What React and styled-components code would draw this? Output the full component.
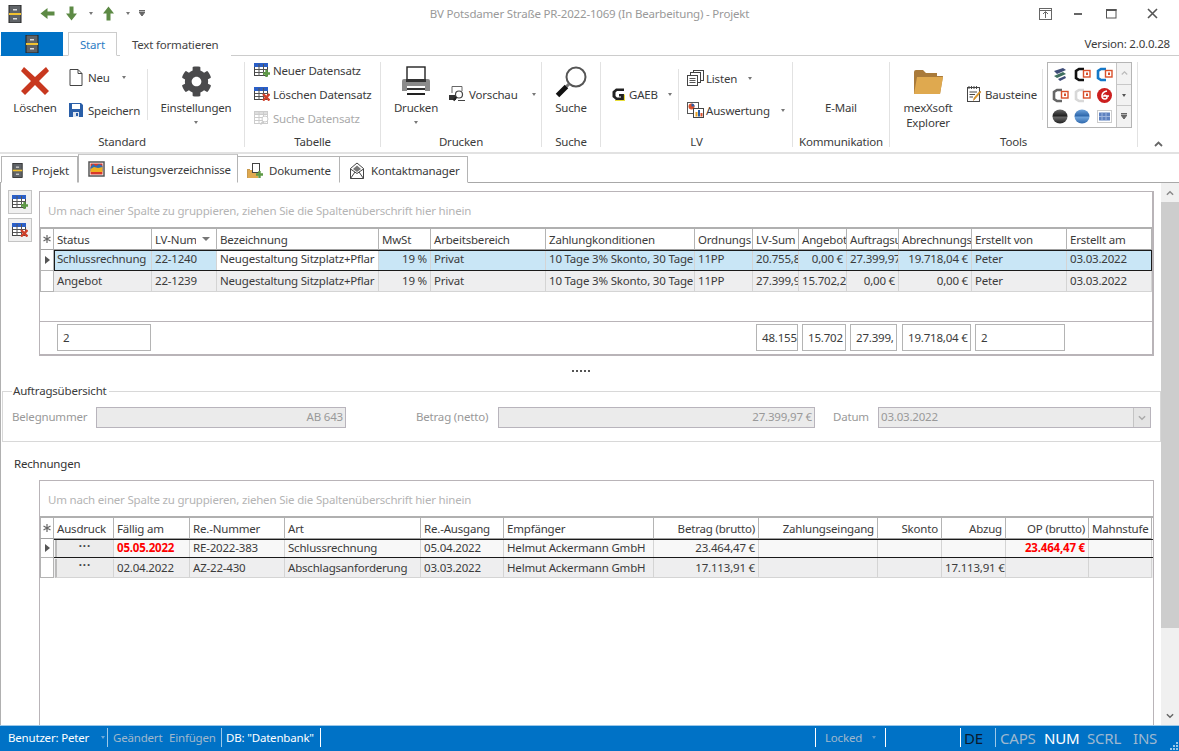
import React from 'react';
import styled, { createGlobalStyle } from 'styled-components';
import { FaCog } from 'react-icons/fa';

const GlobalStyle = createGlobalStyle`
  html, body {
    margin: 0;
    padding: 0;
    background: #fff;
  }
  body {
    font-family: "Noto Sans", "Open Sans", sans-serif;
    font-size: 11.5px;
    letter-spacing: -0.19px;
    color: #3b3b3b;
    overflow: hidden;
  }
  * { box-sizing: border-box; }
`;

const Window = styled.div`
  width: 1179px;
  height: 751px;
  display: flex;
  flex-direction: column;
  overflow: hidden;
  background: #fff;
`;

/* title bar */
const TitleBar = styled.div`
  height: 32px;
  flex: none;
  display: grid;
  grid-template-columns: 390px 1fr 390px;
  align-items: center;
  padding-bottom: 5px;
`;
const QuickBar = styled.div`
  display: flex;
  align-items: center;
  padding-left: 8px;
`;
const QuickItem = styled.span`
  display: flex;
  margin-left: ${p => p.$ml || 0}px;
`;
const TitleText = styled.div`
  text-align: center;
  color: #999;
`;
const WindowButtons = styled.div`
  display: flex;
  justify-content: flex-end;
  align-items: center;
  padding-right: 21px;
`;
const WindowIcon = styled.svg`
  margin-left: ${p => p.$ml || 0}px;
`;
const ArrowSvg = styled.svg`
  transform: rotate(${p => p.$rot}deg);
`;
const Caret = styled.span`
  display: inline-block;
  flex: none;
  width: 0;
  height: 0;
  border-left: ${p => p.$size || 2.5}px solid transparent;
  border-right: ${p => p.$size || 2.5}px solid transparent;
  border-top: ${p => p.$size || 3}px solid ${p => p.$color || '#777'};
  margin-left: ${p => p.$ml || 0}px;
  margin-right: ${p => p.$mr || 0}px;
  margin-top: ${p => p.$mt || 0}px;
`;

/* ribbon tabs */
const TabRow = styled.div`
  height: 24px;
  flex: none;
  display: flex;
  align-items: flex-end;
  padding-left: 1px;
  border-bottom: 1px solid #ccc;
`;
const FileButton = styled.div`
  width: 62px;
  height: 24px;
  margin-bottom: -1px;
  background: #0072c6;
  display: flex;
  align-items: center;
  justify-content: center;
`;
const RibbonTab = styled.div`
  height: 24px;
  margin-left: ${p => p.$ml || 0}px;
  margin-bottom: -1px;
  padding: 0 11px;
  display: flex;
  align-items: center;
  color: ${p => p.$active ? '#2b7cc4' : '#444'};
  background: #fff;
  border: 1px solid ${p => p.$active ? '#ccc' : 'transparent'};
  border-bottom-color: ${p => p.$active ? '#fff' : 'transparent'};
`;
const Version = styled.div`
  margin-left: auto;
  padding-right: 9px;
  align-self: center;
`;

/* ribbon body */
const Ribbon = styled.div`
  height: 98px;
  flex: none;
  display: flex;
  border-bottom: 2px solid #e2e2e2;
  padding-top: 6px;
  position: relative;
`;
const RibbonGroup = styled.div`
  width: ${p => p.$w}px;
  flex: none;
  display: flex;
  flex-direction: column;
  height: 85px;
  border-right: ${p => p.$last ? 'none' : '1px solid #e2e2e2'};
`;
const GroupBody = styled.div`
  flex: 1;
  display: flex;
  min-height: 0;
`;
const GroupLabel = styled.div`
  height: 17px;
  margin-bottom: -3px;
  text-align: center;
  line-height: 17px;
  white-space: nowrap;
`;
const BigButton = styled.div`
  width: ${p => p.$w}px;
  margin-left: ${p => p.$ml || 0}px;
  flex: none;
  display: flex;
  flex-direction: column;
  align-items: center;
  text-align: center;
  line-height: 15px;
  white-space: nowrap;
`;
const BigIcon = styled.div`
  height: 38px;
  flex: none;
  display: flex;
  align-items: center;
  justify-content: center;
`;
const GearIcon = styled(FaCog)`
  color: #4a4a4c;
  font-size: 31px;
`;
const SmallStack = styled.div`
  display: flex;
  flex-direction: column;
  justify-content: space-between;
  flex: none;
  margin-left: ${p => p.$ml || 0}px;
  margin-top: ${p => p.$mt || 0}px;
  width: ${p => p.$w ? `${p.$w}px` : 'auto'};
  height: ${p => p.$h}px;
`;
const SmallButton = styled.div`
  display: flex;
  align-items: center;
  gap: ${p => p.$gap || 4}px;
  white-space: nowrap;
  height: 20px;
  color: ${p => p.$disabled ? '#aaa' : 'inherit'};
`;
const VDivider = styled.div`
  width: 1px;
  height: 51px;
  background: #e2e2e2;
  margin: 7px 0 0 ${p => p.$ml || 0}px;
  flex: none;
`;
const Gallery = styled.div`
  width: 85px;
  height: 66px;
  margin-left: ${p => p.$ml || 0}px;
  display: flex;
  border: 1px solid #b5b5b5;
  flex: none;
`;
const GalleryGrid = styled.div`
  flex: 1;
  display: grid;
  grid-template-columns: repeat(3, 22px);
  grid-auto-rows: 21px;
  align-items: center;
  justify-items: center;
  padding: 1px 0 0 1px;
`;
const GalleryArrows = styled.div`
  width: 15px;
  display: flex;
  flex-direction: column;
  border-left: 1px solid #c4c4c4;
  background: #f2f2f2;
`;
const GalleryArrow = styled.div`
  flex: 1;
  display: flex;
  align-items: center;
  justify-content: center;
  border-bottom: 1px solid #c8c8c8;
  &:last-child { border-bottom: none; }
`;
const CollapseButton = styled.div`
  position: absolute;
  right: 16px;
  bottom: 5px;
  display: flex;
`;

/* document tabs */
const DocTabs = styled.div`
  height: 29px;
  flex: none;
  display: flex;
  align-items: flex-end;
  padding-left: 1px;
  border-bottom: 1px solid #a8a8a8;
`;
const DocTab = styled.div`
  height: ${p => p.$active ? 29 : 27}px;
  margin-bottom: -1px;
  width: ${p => p.$w}px;
  flex: none;
  display: flex;
  align-items: center;
  gap: ${p => p.$gap || 6}px;
  padding-left: ${p => p.$pl || 9}px;
  padding-top: ${p => p.$active ? 1 : 2}px;
  background: #fff;
  border: 1px solid #b4b4b4;
  border-left-width: ${p => p.$first || p.$active ? 1 : 0}px;
  border-bottom-color: #fff;
  border-top-color: ${p => p.$active ? '#c8c8c8' : '#b4b4b4'};
  white-space: nowrap;
`;

/* main */
const Main = styled.div`
  flex: 1;
  min-height: 0;
  display: flex;
  border-left: 1px solid #b0b0b0;
`;
const Content = styled.div`
  flex: 1;
  min-width: 0;
  display: flex;
  flex-direction: column;
  overflow: hidden;
`;
const TopSection = styled.div`
  display: flex;
  padding: 8px 7px 0 7px;
  height: 174px;
  flex: none;
`;
const SideTools = styled.div`
  width: 31px;
  flex: none;
  display: flex;
  flex-direction: column;
  gap: 4px;
  margin-top: -1px;
`;
const ToolButton = styled.div`
  width: 24px;
  height: 24px;
  background: #f0f0f0;
  border: 1px solid #c4c4c4;
  display: flex;
  align-items: center;
  justify-content: center;
`;
const GridPanel = styled.div`
  width: 1115px;
  height: ${p => p.$h}px;
  flex: none;
  border: 1px solid #b9b4b8;
  border-bottom-width: ${p => p.$open ? 0 : 2}px;
  border-right-width: ${p => p.$open ? 1 : 2}px;
  display: flex;
  flex-direction: column;
  overflow: hidden;
`;
const GroupHint = styled.div`
  height: 37px;
  flex: none;
  padding: 11px 0 0 8px;
  color: #b4b4b4;
  border-bottom: 2px solid #b0b0b0;
`;
const Row = styled.div`
  display: grid;
  grid-template-columns: ${p => p.$cols};
  height: ${p => p.$h}px;
  flex: none;
  background: ${p => p.$bg || '#fff'};
  position: relative;
`;
const HeaderCell = styled.div`
  border-right: 1px solid #b4b4b4;
  border-bottom: 1px solid #a0a0a0;
  padding: 0 3px;
  display: flex;
  align-items: center;
  justify-content: ${p => p.$right ? 'flex-end' : 'flex-start'};
  white-space: nowrap;
  overflow: hidden;
  color: #3b3b3b;
  &:first-child { border-left: 1px solid #b4b4b4; justify-content: center; padding: 0; }
`;
const Cell = styled.div`
  border-right: 1px solid #d4d4d4;
  border-bottom: 1px solid #d4d4d4;
  padding: 0 3px;
  line-height: ${p => p.$lh}px;
  text-align: ${p => p.$right ? 'right' : 'left'};
  white-space: nowrap;
  overflow: hidden;
  background: ${p => p.$bg || 'transparent'};
  color: ${p => p.$red ? '#ff0000' : '#3b3b3b'};
  font-weight: ${p => p.$red ? 700 : 400};
`;
const IndicatorCell = styled.div`
  background: #fff;
  border: 1px solid #b4b4b4;
  border-top: none;
  display: flex;
  align-items: center;
  justify-content: center;
`;
const SelectionBox = styled.div`
  position: absolute;
  left: 14px;
  right: 0;
  top: 0;
  bottom: 0;
  border: 1px solid #1a1a1a;
  border-left-width: ${p => p.$sides ? 1 : 0}px;
  border-right-width: ${p => p.$sides ? 1 : 0}px;
  pointer-events: none;
`;
const ButtonCell = styled.div`
  margin: 1px 0 0 1px;
  border-left: 2px solid #bbb;
  border-right: 1px solid #d4d4d4;
  border-bottom: 1px solid #d4d4d4;
  background: #ececec;
  color: #444;
  font-weight: 700;
  text-align: center;
  line-height: 11px;
  letter-spacing: 1px;
`;
const Footer = styled.div`
  border-top: 1px solid #b9b4b8;
  margin-top: ${p => p.$mt}px;
  height: 32px;
  flex: none;
  display: grid;
  grid-template-columns: ${p => p.$cols};
  padding-top: 2px;
`;
const SumBox = styled.div`
  height: 27px;
  margin: 0 ${p => p.$mr ?? 1}px 0 ${p => p.$ml ?? 3}px;
  border: 1px solid #b4b4b4;
  line-height: 25px;
  padding: 0 0 0 5px;
  overflow: hidden;
  white-space: nowrap;
`;
const SortHeader = styled.span`
  width: 41px;
  flex: none;
  overflow: hidden;
`;
const Splitter = styled.div`
  height: 27px;
  flex: none;
  display: flex;
  align-items: center;
  justify-content: center;
  gap: 2px;
`;
const Dot = styled.span`
  width: 2px;
  height: 2px;
  background: #555;
`;
const FieldGroup = styled.fieldset`
  margin: 0 0 0 1px;
  padding: 9px 9px 0 9px;
  height: 58px;
  width: 1159px;
  flex: none;
  border: 1px solid #d8d8d8;
  display: flex;
  align-items: flex-start;
  & > legend {
    padding: 0 2px 0 1px;
    margin-left: 0;
    line-height: 14px;
  }
`;
const FieldLabel = styled.span`
  color: #999;
  white-space: nowrap;
  width: ${p => p.$w}px;
  flex: none;
  line-height: 19px;
  margin-left: ${p => p.$ml || 0}px;
`;
const FieldInput = styled.div`
  width: ${p => p.$w}px;
  height: 21px;
  background: #ebebeb;
  border: 1px solid #b8b4bc;
  color: #999;
  display: flex;
  align-items: center;
  justify-content: ${p => p.$left ? 'flex-start' : 'flex-end'};
  padding: 0 2px 2px;
  flex: none;
  position: relative;
`;
const Combo = styled.div`
  position: absolute;
  right: 0;
  top: 0;
  bottom: 0;
  width: 17px;
  background: #e4e4e4;
  border-left: 1px solid #c4c4c4;
  display: flex;
  align-items: center;
  justify-content: center;
`;
const SectionLabel = styled.div`
  height: 38px;
  flex: none;
  padding: 14px 0 0 13px;
  color: #333;
`;
const LowerSection = styled.div`
  flex: 1;
  min-height: 0;
  padding-left: 38px;
`;

/* scrollbar */
const ScrollBar = styled.div`
  width: 18px;
  flex: none;
  display: flex;
  flex-direction: column;
  background: #f0f0f0;
`;
const ScrollEnd = styled.div`
  height: 19px;
  flex: none;
  display: flex;
  align-items: center;
  justify-content: center;
`;
const ScrollThumb = styled.div`
  height: ${p => p.$h}px;
  flex: none;
  background: #cdcdcd;
`;
const ScrollTrack = styled.div`
  flex: 1;
`;

/* status bar */
const StatusBar = styled.div`
  height: 26px;
  flex: none;
  background: #0072c6;
  border-top: 1px solid #9cc8e8;
  padding-bottom: 2px;
  display: flex;
  align-items: center;
  color: #fff;
  position: relative;
`;
const StatusItem = styled.div`
  display: flex;
  align-items: center;
  flex: none;
  height: 19px;
  white-space: nowrap;
  padding-left: ${p => p.$pl ?? 5}px;
  margin-left: ${p => p.$ml || 0}px;
  width: ${p => p.$w ? `${p.$w}px` : 'auto'};
  color: ${p => p.$color || '#fff'};
  font-size: ${p => p.$size || 11.5}px;
  border-right: ${p => p.$line ? `1px solid ${p.$line}` : 'none'};
  border-left: ${p => p.$lineLeft ? `1px solid ${p.$lineLeft}` : 'none'};
`;
const Grip = styled.svg`
  position: absolute;
  right: 1px;
  bottom: 1px;
`;

/* icons */
const Cabinet = ({ s = 14, h = 18 }) => (
  <svg width={s} height={h} viewBox="0 0 14 18">
    <rect x="1" y="0" width="12" height="18" fill="#5f6367" />
    <rect x="1" y="0" width="12" height="18" fill="none" stroke="#222" strokeWidth="1" />
    <rect x="1" y="8" width="12" height="2" fill="#f2c230" />
    <rect x="5" y="4" width="4" height="1.5" fill="#ddd" />
    <rect x="5" y="13" width="4" height="1.5" fill="#ddd" />
  </svg>
);

const GreenArrow = ({ dir }) => {
  const rot = { left: -90, down: 180, up: 0 }[dir];
  return (
    <ArrowSvg width="15" height="15" viewBox="0 0 15 15" $rot={rot}>
      <path d="M7.5 0.5 L13 7.5 H9.5 V14.5 H5.5 V7.5 H2 Z" fill="#5d8a45" />
    </ArrowSvg>
  );
};

const BigCross = () => (
  <svg width="30" height="30" viewBox="0 0 30 30">
    <path d="M4 1 L15 11 L26 1 L29 5 L19 15 L29 25 L25 29 L15 19 L5 29 L1 25 L11 15 L1 5 Z" fill="#c8381f" />
  </svg>
);

const DocIcon = () => (
  <svg width="14" height="17" viewBox="0 0 14 17">
    <path d="M1 .5 H9 L13 4.5 V16.5 H1 Z M9 .5 V4.5 H13" fill="#fff" stroke="#444" strokeWidth="1" />
  </svg>
);

const Floppy = () => (
  <svg width="14" height="14" viewBox="0 0 14 14">
    <path d="M0 0 H12 L14 2 V14 H0 Z" fill="#2a5fa8" />
    <rect x="3" y="1" width="8" height="5" fill="#fff" />
    <rect x="4" y="9" width="6" height="5" fill="#dfe6f0" />
    <rect x="7" y="10" width="2" height="3" fill="#2a5fa8" />
  </svg>
);

const TableIcon = ({ mark, muted }) => (
  <svg width="16" height="14" viewBox="0 0 16 14">
    <rect x=".5" y=".5" width="13" height="12" fill="#fff" stroke={muted ? '#ccc' : '#444'} />
    <rect x=".5" y=".5" width="13" height="3" fill={muted ? '#ddd' : '#2a5fc8'} stroke={muted ? '#ccc' : '#2a5fc8'} />
    <path d="M5 1 V13 M9.5 1 V13 M1 6.5 H14 M1 9.5 H14" stroke={muted ? '#ccc' : '#555'} strokeWidth="1" />
    {mark === 'plus' && <path d="M9 10.5 H16 M12.5 7 V14" stroke="#5d9a45" strokeWidth="2.4" />}
    {mark === 'cross' && <path d="M9 7 L15.5 13.5 M15.5 7 L9 13.5" stroke="#d0402a" strokeWidth="2.4" />}
    {mark === 'search' && (
      <g>
        <circle cx="11" cy="8" r="3" fill="#fff" stroke="#ccc" />
        <path d="M9 10.5 L6.5 13.5" stroke="#ccc" strokeWidth="1.6" />
      </g>
    )}
  </svg>
);

const Printer = () => (
  <svg width="32" height="30" viewBox="0 0 32 30">
    <rect x="7" y="1" width="18" height="15" fill="#fff" stroke="#222" strokeWidth="1.4" />
    <path d="M2 15 Q2 13 4 13 H28 Q30 13 30 15 V25 H2 Z" fill="#8b8b8b" />
    <rect x="6" y="13" width="20" height="3" fill="#333" />
    <rect x="7" y="20" width="18" height="9" fill="#fff" />
    <rect x="7" y="22" width="18" height="2" fill="#333" />
    <rect x="7" y="27" width="18" height="2" fill="#222" />
  </svg>
);

const PreviewIcon = () => (
  <svg width="17" height="16" viewBox="0 0 17 16">
    <path d="M3 .5 H13 V5 M3 .5 V7" fill="none" stroke="#666" />
    <rect x="0" y="9" width="7" height="5" fill="#333" />
    <circle cx="10" cy="8.5" r="3.5" fill="#fff" stroke="#444" strokeWidth="1.2" />
    <path d="M7.5 11 L4.5 14.5" stroke="#222" strokeWidth="2" />
    <path d="M9 14.5 H16" stroke="#444" />
  </svg>
);

const Magnifier = () => (
  <svg width="33" height="33" viewBox="0 0 33 33">
    <circle cx="21" cy="12" r="9.5" fill="#fff" stroke="#555" strokeWidth="2" />
    <path d="M14 19 L11.5 21.5" stroke="#777" strokeWidth="3" />
    <path d="M11.5 21.5 L2.5 30.5" stroke="#111" strokeWidth="5" />
  </svg>
);

const GaebIcon = () => (
  <svg width="13" height="13" viewBox="0 0 13 13">
    <path d="M12 .5 H4 L.5 3.5 V9 L4 12 H12 V6 H7 V8.5 H9 V9.5 H5 L3.5 8 V4.5 L5 3 H12 Z" fill="#222" />
    <path d="M12.5 6.5 V12.5 H3" fill="none" stroke="#e8de3a" strokeWidth="1.2" />
  </svg>
);

const ListIcon = () => (
  <svg width="17" height="16" viewBox="0 0 17 16">
    <rect x="6.5" y=".5" width="10" height="10" fill="#fff" stroke="#444" />
    <rect x="3.5" y="2.5" width="10" height="10" fill="#fff" stroke="#444" />
    <rect x=".5" y="5.5" width="10" height="10" fill="#fff" stroke="#444" />
    <path d="M2.5 8.5 H8.5 M2.5 10.5 H8.5 M2.5 12.5 H8.5" stroke="#555" />
  </svg>
);

const ChartIcon = () => (
  <svg width="17" height="16" viewBox="0 0 17 16">
    <rect x=".5" y=".5" width="11" height="11" fill="#fff" stroke="#555" />
    <circle cx="4.5" cy="4.5" r="3" fill="#d9502b" />
    <path d="M4.5 4.5 V1.5 A3 3 0 0 1 7.5 4.5 Z" fill="#2a5fa8" />
    <rect x="6.5" y="6.5" width="10" height="9" fill="#fff" stroke="#444" />
    <rect x="8.5" y="10" width="2" height="4.5" fill="#e8a020" />
    <rect x="11" y="8" width="2" height="6.5" fill="#2a5fa8" />
    <rect x="13.5" y="11" width="2" height="3.5" fill="#d9502b" />
  </svg>
);

const FolderIcon = () => (
  <svg width="31" height="25" viewBox="0 0 31 25">
    <path d="M1 25 V3 Q1 1 3 1 H10 L13 4 H24 V7 H2" fill="#a97a3a" />
    <path d="M1 25 V5 H24 V7 H30 L27 25 Z" fill="#a97a3a" />
    <path d="M1 25 L4 8 H30 L27 25 Z" fill="#dfa94f" />
  </svg>
);

const NotesIcon = () => (
  <svg width="15" height="16" viewBox="0 0 15 16">
    <rect x=".5" y="1.5" width="12" height="14" fill="#fff" stroke="#444" />
    <path d="M2 0 V3 M4.5 0 V3 M7 0 V3 M9.5 0 V3 M2.5 6 H10 M2.5 8.5 H8 M2.5 11 H6" stroke="#444" />
    <path d="M14 6 L8 13 L6.5 14.5 L7 12 L13 5 Z" fill="#e8a020" stroke="#b06a10" strokeWidth=".5" />
  </svg>
);

const OfficeTile = ({ color }) => (
  <svg width="17" height="15" viewBox="0 0 17 15">
    <path d="M10 2 H5 L2 4 V11 L5 13 H10" fill="none" stroke={color} strokeWidth="2.6" />
    <rect x="9.5" y="3.5" width="6.5" height="6.5" fill="#fff" stroke="#d9502b" strokeWidth="1.4" />
    <rect x="12" y="5.5" width="2" height="2.5" fill="#d9502b" />
  </svg>
);

const Orb = ({ id, light, dark }) => (
  <svg width="16" height="15" viewBox="0 0 16 15">
    <defs>
      <linearGradient id={id} x1="0" y1="0" x2="0" y2="1">
        <stop offset="0" stopColor={light} />
        <stop offset=".45" stopColor={dark} />
        <stop offset=".55" stopColor={light} />
        <stop offset="1" stopColor={dark} />
      </linearGradient>
    </defs>
    <ellipse cx="8" cy="7.5" rx="7.5" ry="7" fill={`url(#${id})`} />
  </svg>
);

const GalleryIcons = [
  <svg key="a" width="14" height="13" viewBox="0 0 14 13">
    <path d="M1 3 L10 0 L13 2 L4 6 Z" fill="#3f4d78" />
    <path d="M1 8 L10 4 L13 6 L4 10 Z" fill="#3f6f5f" />
    <path d="M5 11 L12 8 L13 10 L7 13 Z" fill="#3f4d78" />
  </svg>,
  <OfficeTile key="b" color="#111" />,
  <OfficeTile key="c" color="#1478c8" />,
  <OfficeTile key="d" color="#666" />,
  <OfficeTile key="e" color="#d8d8d8" />,
  <svg key="f" width="15" height="15" viewBox="0 0 15 15">
    <circle cx="7.5" cy="7.5" r="7.5" fill="#cc1f1f" />
    <path d="M10 3 Q5 4 5 8 Q5 11 8 11 Q10 11 10 9 Q10 7 7 7.5 M6 8 H12" fill="none" stroke="#fff" strokeWidth="1.6" />
  </svg>,
  <Orb key="g" id="orbDark" light="#666" dark="#222" />,
  <Orb key="h" id="orbBlue" light="#6fa4dc" dark="#2f68ac" />,
  <svg key="i" width="15" height="13" viewBox="0 0 15 13">
    <rect x=".5" y=".5" width="14" height="12" fill="#fff" stroke="#ccc" />
    <rect x="2" y="2.5" width="11" height="8" fill="#5f82c0" />
    <path d="M2 6.5 H13 M5 2.5 V10.5 M9 2.5 V10.5" stroke="#9fb6de" />
  </svg>,
];

const BookIcon = () => (
  <svg width="17" height="16" viewBox="0 0 17 16">
    <rect x="1" y="1" width="15" height="14" fill="#fff" stroke="#555" strokeWidth="1.5" />
    <rect x="2.5" y="2.5" width="12" height="11" fill="#d8382a" />
    <path d="M2.5 6 L5 3 L8 5 L11 3 L14.5 5 V10 H2.5 Z" fill="#2f6db0" />
    <path d="M2.5 8 L6 6 L10 7 L14.5 6 V11 H2.5 Z" fill="#f0b020" />
  </svg>
);

const DocsIcon = () => (
  <svg width="17" height="16" viewBox="0 0 17 16">
    <path d="M0 6 H3 V15 H0 Z" fill="#c89a50" />
    <path d="M1 7 H11 V15 H1 Z" fill="#dfa94f" />
    <rect x="5.5" y=".5" width="7" height="9" fill="#fff" stroke="#444" />
    <path d="M9 11.5 H16 M12.5 8 V15" stroke="#5d9a45" strokeWidth="2.4" />
  </svg>
);

const MailIcon = () => (
  <svg width="14" height="17" viewBox="0 0 14 17">
    <path d="M.5 6.5 L7 1 L13.5 6.5 V16.5 H.5 Z" fill="#fff" stroke="#444" />
    <path d="M3 7 L7 3.5 L11 7 L7 10 Z" fill="#777" />
    <path d="M.5 7 L7 11.5 L13.5 7 M.5 16.5 L5 10 M13.5 16.5 L9 10" fill="none" stroke="#444" />
  </svg>
);

const Chevron = ({ up, color = '#777', w = 9, sw = 1.6 }) => (
  <svg width={w} height="6" viewBox="0 0 9 6">
    <path d={up ? 'M1 5 L4.5 1.5 L8 5' : 'M1 1 L4.5 4.5 L8 1'} fill="none" stroke={color} strokeWidth={sw} />
  </svg>
);

const RowPointer = () => (
  <svg width="5" height="8" viewBox="0 0 5 8"><path d="M0 0 L5 4 L0 8 Z" fill="#555" /></svg>
);

const Asterisk = () => (
  <svg width="8" height="8" viewBox="0 0 8 8">
    <path d="M4 0 V8 M0.5 2 L7.5 6 M7.5 2 L0.5 6" stroke="#666" strokeWidth="1.2" />
  </svg>
);

const MoreIcon = () => (
  <svg width="6" height="7" viewBox="0 0 6 7">
    <path d="M0 .5 H6 M0 2 H6 L3 6 Z" stroke="#666" fill="#666" strokeWidth="1" />
  </svg>
);

/* table data */
const topCols = '14px 98px 65px 162px 52px 115px 149px 58px 46px 48px 52px 73px 95px 85px';
const topHead = ['Status', 'LV-Num', 'Bezeichnung', 'MwSt', 'Arbeitsbereich', 'Zahlungkonditionen', 'Ordnungs', 'LV-Sum', 'Angebot', 'Auftragsu', 'Abrechnungs', 'Erstellt von', 'Erstellt am'];
const topRows = [
  ['Schlussrechnung', '22-1240', 'Neugestaltung Sitzplatz+Pflar', '19 %', 'Privat', '10 Tage 3% Skonto, 30 Tage', '11PP', '20.755,8', '0,00 €', '27.399,97', '19.718,04 €', 'Peter', '03.03.2022'],
  ['Angebot', '22-1239', 'Neugestaltung Sitzplatz+Pflar', '19 %', 'Privat', '10 Tage 3% Skonto, 30 Tage', '11PP', '27.399,9', '15.702,2', '0,00 €', '0,00 €', 'Peter', '03.03.2022'],
];
const topRight = [3, 7, 8, 9, 10];

const lowCols = '14px 60px 76px 95px 136px 83px 150px 105px 119px 64px 64px 83px 63px';
const lowHead = ['Ausdruck', 'Fällig am', 'Re.-Nummer', 'Art', 'Re.-Ausgang', 'Empfänger', 'Betrag (brutto)', 'Zahlungseingang', 'Skonto', 'Abzug', 'OP (brutto)', 'Mahnstufe'];
const lowHeadRight = [6, 7, 8, 9, 10];
const lowRows = [
  { red: true, cells: ['05.05.2022', 'RE-2022-383', 'Schlussrechnung', '05.04.2022', 'Helmut Ackermann GmbH', '23.464,47 €', '', '', '', '23.464,47 €', ''] },
  { red: false, cells: ['02.04.2022', 'AZ-22-430', 'Abschlagsanforderung', '03.03.2022', 'Helmut Ackermann GmbH', '17.113,91 €', '', '', '17.113,91 €', '', ''] },
];
const lowRight = [5, 6, 7, 8, 9, 10];

const App = () => {
  return (
    <>
      <GlobalStyle />
      <Window>
        <TitleBar>
          <QuickBar>
            <Cabinet />
            <QuickItem $ml={18}><GreenArrow dir="left" /></QuickItem>
            <QuickItem $ml={9}><GreenArrow dir="down" /></QuickItem>
            <Caret $ml={10} />
            <QuickItem $ml={8}><GreenArrow dir="up" /></QuickItem>
            <Caret $ml={10} />
            <QuickItem $ml={9}><MoreIcon /></QuickItem>
          </QuickBar>
          <TitleText>BV Potsdamer Straße PR-2022-1069 (In Bearbeitung) - Projekt</TitleText>
          <WindowButtons>
            <WindowIcon width="13" height="12" viewBox="0 0 13 12">
              <rect x=".5" y=".5" width="12" height="11" fill="none" stroke="#666" />
              <path d="M.5 2.5 H12.5 M6.5 10 V4 M4 6 L6.5 3.5 L9 6" fill="none" stroke="#666" />
            </WindowIcon>
            <WindowIcon $ml={22} width="8" height="3" viewBox="0 0 8 3"><rect width="8" height="2" y="1" fill="#666" /></WindowIcon>
            <WindowIcon $ml={24} width="11" height="10" viewBox="0 0 11 10">
              <rect x=".5" y=".5" width="9.5" height="8.5" fill="none" stroke="#555" />
              <rect x="0" y="0" width="10.5" height="2" fill="#555" />
            </WindowIcon>
            <WindowIcon $ml={30} width="11" height="11" viewBox="0 0 11 11">
              <path d="M1 1 L10 10 M10 1 L1 10" stroke="#555" strokeWidth="1.6" />
            </WindowIcon>
          </WindowButtons>
        </TitleBar>

        <TabRow>
          <FileButton><Cabinet /></FileButton>
          <RibbonTab $active $ml={5}>Start</RibbonTab>
          <RibbonTab $ml={3}>Text formatieren</RibbonTab>
          <Version>Version: 2.0.0.28</Version>
        </TabRow>

        <Ribbon>
          <RibbonGroup $w={245}>
            <GroupBody>
              <BigButton $w={50} $ml={10}>
                <BigIcon><BigCross /></BigIcon>
                Löschen
              </BigButton>
              <SmallStack $ml={9} $mt={5} $h={53} $w={78}>
                <SmallButton $gap={5}><DocIcon />Neu<Caret $ml={7} /></SmallButton>
                <SmallButton $gap={5}><Floppy />Speichern</SmallButton>
              </SmallStack>
              <VDivider />
              <BigButton $w={74} $ml={11}>
                <BigIcon><GearIcon /></BigIcon>
                Einstellungen
                <Caret $color="#777" $mt={6} />
              </BigButton>
            </GroupBody>
            <GroupLabel>Standard</GroupLabel>
          </RibbonGroup>

          <RibbonGroup $w={136}>
            <GroupBody>
              <SmallStack $ml={9} $mt={-2} $h={68}>
                <SmallButton $gap={3}><TableIcon mark="plus" />Neuer Datensatz</SmallButton>
                <SmallButton $gap={3}><TableIcon mark="cross" />Löschen Datensatz</SmallButton>
                <SmallButton $gap={3} $disabled><TableIcon mark="search" muted />Suche Datensatz</SmallButton>
              </SmallStack>
            </GroupBody>
            <GroupLabel>Tabelle</GroupLabel>
          </RibbonGroup>

          <RibbonGroup $w={161}>
            <GroupBody>
              <BigButton $w={48} $ml={11}>
                <BigIcon><Printer /></BigIcon>
                Drucken
                <Caret $mt={6} />
              </BigButton>
              <SmallStack $ml={9} $mt={22} $h={20}>
                <SmallButton $gap={3}><PreviewIcon />Vorschau<Caret $ml={11} /></SmallButton>
              </SmallStack>
            </GroupBody>
            <GroupLabel>Drucken</GroupLabel>
          </RibbonGroup>

          <RibbonGroup $w={59}>
            <GroupBody>
              <BigButton $w={58}>
                <BigIcon><Magnifier /></BigIcon>
                Suche
              </BigButton>
            </GroupBody>
            <GroupLabel>Suche</GroupLabel>
          </RibbonGroup>

          <RibbonGroup $w={192}>
            <GroupBody>
              <SmallStack $ml={11} $mt={22} $h={20} $w={66}>
                <SmallButton $gap={4}><GaebIcon />GAEB<Caret $ml={6} /></SmallButton>
              </SmallStack>
              <VDivider />
              <SmallStack $ml={8} $mt={6} $h={52}>
                <SmallButton $gap={2}><ListIcon />Listen<Caret $ml={9} /></SmallButton>
                <SmallButton $gap={2}><ChartIcon />Auswertung<Caret $ml={9} /></SmallButton>
              </SmallStack>
            </GroupBody>
            <GroupLabel>LV</GroupLabel>
          </RibbonGroup>

          <RibbonGroup $w={97}>
            <GroupBody>
              <BigButton $w={96}>
                <BigIcon />
                E-Mail
              </BigButton>
            </GroupBody>
            <GroupLabel>Kommunikation</GroupLabel>
          </RibbonGroup>

          <RibbonGroup $w={248}>
            <GroupBody>
              <BigButton $w={60} $ml={8}>
                <BigIcon><FolderIcon /></BigIcon>
                <span>mexXsoft</span>
                <span>Explorer</span>
              </BigButton>
              <SmallStack $ml={9} $mt={22} $h={20} $w={70}>
                <SmallButton $gap={3}><NotesIcon />Bausteine</SmallButton>
              </SmallStack>
              <VDivider $ml={5} />
              <Gallery $ml={4}>
                <GalleryGrid>{GalleryIcons}</GalleryGrid>
                <GalleryArrows>
                  <GalleryArrow><Chevron up color="#bbb" w={7} /></GalleryArrow>
                  <GalleryArrow><Caret $color="#555" /></GalleryArrow>
                  <GalleryArrow><MoreIcon /></GalleryArrow>
                </GalleryArrows>
              </Gallery>
            </GroupBody>
            <GroupLabel>Tools</GroupLabel>
          </RibbonGroup>

          <CollapseButton><Chevron up color="#666" w={9} sw={1.8} /></CollapseButton>
        </Ribbon>

        <DocTabs>
          <DocTab $first $w={77} $pl={10} $gap={9}><Cabinet s={11} h={15} />Projekt</DocTab>
          <DocTab $active $w={160}><BookIcon />Leistungsverzeichnisse</DocTab>
          <DocTab $w={102} $gap={5}><DocsIcon />Dokumente</DocTab>
          <DocTab $w={128} $pl={10} $gap={7}><MailIcon />Kontaktmanager</DocTab>
        </DocTabs>

        <Main>
          <Content>
            <TopSection>
              <SideTools>
                <ToolButton><TableIcon mark="plus" /></ToolButton>
                <ToolButton><TableIcon mark="cross" /></ToolButton>
              </SideTools>
              <GridPanel $h={165}>
                <GroupHint>Um nach einer Spalte zu gruppieren, ziehen Sie die Spaltenüberschrift hier hinein</GroupHint>
                <Row $cols={topCols} $h={21}>
                  <HeaderCell><Asterisk /></HeaderCell>
                  {topHead.map((h, i) => (
                    <HeaderCell key={h}>
                      {i === 1 ? (
                        <>
                          <SortHeader>{h}</SortHeader>
                          <Caret $color="#777" $size={4.5} $ml={6} />
                        </>
                      ) : h}
                    </HeaderCell>
                  ))}
                </Row>
                {topRows.map((row, r) => (
                  <Row key={row[1]} $cols={topCols} $h={21} $bg={r === 0 ? '#c9e6f6' : '#eeeeef'}>
                    <IndicatorCell>{r === 0 && <RowPointer />}</IndicatorCell>
                    {row.map((c, i) => (
                      <Cell key={i} $lh={r === 0 ? 18 : 19} $right={topRight.includes(i)} $bg={r === 0 && i === 2 ? '#fff' : undefined}>{c}</Cell>
                    ))}
                    {r === 0 && <SelectionBox $sides />}
                  </Row>
                ))}
                <Footer $cols={topCols} $mt={29}>
                  <span />
                  <SumBox>2</SumBox>
                  <span /><span /><span /><span /><span /><span />
                  <SumBox>48.155</SumBox>
                  <SumBox>15.702</SumBox>
                  <SumBox $mr={2}>27.399,</SumBox>
                  <SumBox>19.718,04 €</SumBox>
                  <SumBox $mr={2}>2</SumBox>
                  <span />
                </Footer>
              </GridPanel>
            </TopSection>

            <Splitter>
              <Dot /><Dot /><Dot /><Dot /><Dot />
            </Splitter>

            <FieldGroup>
              <legend>Auftragsübersicht</legend>
              <FieldLabel $w={84}>Belegnummer</FieldLabel>
              <FieldInput $w={250}>AB 643</FieldInput>
              <FieldLabel $ml={70} $w={82}>Betrag (netto)</FieldLabel>
              <FieldInput $w={317}>27.399,97 €</FieldInput>
              <FieldLabel $ml={18} $w={45}>Datum</FieldLabel>
              <FieldInput $w={273} $left>03.03.2022<Combo><Chevron color="#aaa" w={8} /></Combo></FieldInput>
            </FieldGroup>

            <SectionLabel>Rechnungen</SectionLabel>

            <LowerSection>
              <GridPanel $h={245} $open>
                <GroupHint>Um nach einer Spalte zu gruppieren, ziehen Sie die Spaltenüberschrift hier hinein</GroupHint>
                <Row $cols={lowCols} $h={21}>
                  <HeaderCell><Asterisk /></HeaderCell>
                  {lowHead.map((h, i) => (
                    <HeaderCell key={h} $right={lowHeadRight.includes(i)}>{h}</HeaderCell>
                  ))}
                </Row>
                {lowRows.map((row, r) => (
                  <Row key={row.cells[1]} $cols={lowCols} $h={r === 0 ? 19 : 20} $bg={r === 0 ? '#f8f8f8' : '#eeeeef'}>
                    <IndicatorCell>{r === 0 && <RowPointer />}</IndicatorCell>
                    <ButtonCell>···</ButtonCell>
                    {row.cells.map((c, i) => (
                      <Cell key={i} $lh={r === 0 ? 18 : 19} $right={lowRight.includes(i)} $red={row.red && (i === 0 || i === 9)}>{c}</Cell>
                    ))}
                    {r === 0 && <SelectionBox />}
                  </Row>
                ))}
              </GridPanel>
            </LowerSection>
          </Content>

          <ScrollBar>
            <ScrollEnd><Chevron up color="#888" w={8} /></ScrollEnd>
            <ScrollThumb $h={426} />
            <ScrollTrack />
            <ScrollEnd><Chevron color="#666" w={8} /></ScrollEnd>
          </ScrollBar>
        </Main>

        <StatusBar>
          <StatusItem $pl={8} $line="#9cc8e8" $w={108}>Benutzer: Peter<Caret $ml={12} $color="#6ea8d8" /></StatusItem>
          <StatusItem $color="#a0b8cc" $w={61}>Geändert</StatusItem>
          <StatusItem $color="#a0b8cc" $pl={0} $w={53} $line="#9cc8e8">Einfügen</StatusItem>
          <StatusItem $pl={4} $w={99} $line="#fff">DB: "Datenbank"</StatusItem>
          <StatusItem $ml={494} $lineLeft="#fff" $line="#fff" $w={71} $color="#a0b8cc" $pl={9}>Locked<Caret $ml={10} $color="#5a9ad0" /></StatusItem>
          <StatusItem $ml={74} $lineLeft="#fff" $line="#9cc8e8" $w={36} $color="#0a1a30" $size={15} $pl={3}>DE</StatusItem>
          <StatusItem $w={44} $color="#9db8d0" $size={15} $pl={4}>CAPS</StatusItem>
          <StatusItem $w={43} $size={15} $pl={4}>NUM</StatusItem>
          <StatusItem $w={46} $color="#9db8d0" $size={15} $pl={4}>SCRL</StatusItem>
          <StatusItem $color="#9db8d0" $size={15} $pl={4}>INS</StatusItem>
          <Grip width="9" height="9" viewBox="0 0 9 9">
            <path d="M7 1 h2 v2 h-2z M4 4 h2 v2 h-2z M7 4 h2 v2 h-2z M1 7 h2 v2 h-2z M4 7 h2 v2 h-2z M7 7 h2 v2 h-2z" fill="#9cc8e8" />
          </Grip>
        </StatusBar>
      </Window>
    </>
  );
};

export default App;
